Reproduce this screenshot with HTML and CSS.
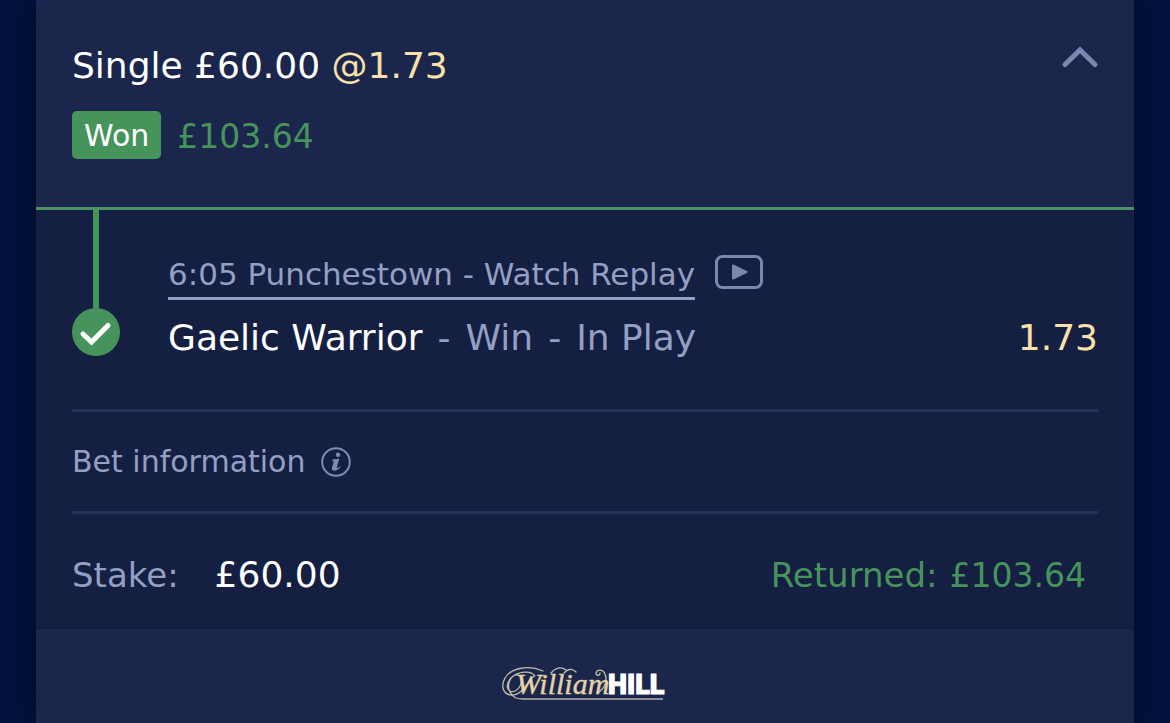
FILE: index.html
```
<!DOCTYPE html>
<html lang="en">
<head>
<meta charset="utf-8">
<meta name="viewport" content="width=device-width, initial-scale=1">
<title>Bet receipt</title>
<link rel="stylesheet" href="styles.css">
</head>
<body>
<main class="slip">
  <header class="slip-header">
    <div class="summary">
      <h1 class="title">Single £60.00 <span class="odds">@1.73</span></h1>
      <div class="result"><span class="badge">Won</span><span class="winnings">£103.64</span></div>
    </div>
    <button class="toggle" type="button" aria-label="Collapse bet" aria-expanded="true">
      <svg width="40" height="28" viewBox="0 0 40 28" fill="none" stroke="currentColor" stroke-width="5" stroke-linecap="round"><path d="M5 22.500 20 8 35 22.500" stroke-linejoin="miter"/></svg>
    </button>
  </header>
  <section class="details">
    <div class="leg">
      <div class="track">
        <span class="line"></span>
        <svg class="tick" width="48" height="48" viewBox="0 0 48 48" role="img" aria-label="Won"><circle cx="24" cy="24" r="24" fill="#46935b"/><path d="M11 26 19.500 34 36 17.500" fill="none" stroke="#fff" stroke-width="5" stroke-linecap="round" stroke-linejoin="miter"/></svg>
      </div>
      <div class="leg-text">
        <div class="event">
          <a class="event-link" href="#replay">6:05 Punchestown - Watch Replay</a>
          <button class="replay" type="button" aria-label="Play replay">
            <svg width="48" height="34" viewBox="0 0 48 34"><rect x="1.500" y="1.500" width="45" height="31" rx="6" fill="none" stroke="currentColor" stroke-width="3"/><path d="M18 10.500v13l13.500-6.500z" fill="currentColor" stroke="currentColor" stroke-width="2" stroke-linejoin="round"/></svg>
          </button>
        </div>
        <div class="selection">
          <div class="pick"><span class="runner">Gaelic Warrior</span><span>-</span><span>Win</span><span>-</span><span>In Play</span></div>
          <span class="odds">1.73</span>
        </div>
      </div>
    </div>
    <button class="info" type="button">Bet information
      <svg width="30" height="30" viewBox="0 0 30 30"><circle cx="15" cy="15" r="13.800" fill="none" stroke="currentColor" stroke-width="2"/><circle cx="17" cy="7.800" r="2.200" fill="currentColor"/><path d="M11.500 12.500c2.200 0 4-.3 6.800-.9l-2.500 8.900c-.3 1.200 1.400.6 3.200-1.300l.5.600c-2.200 3.200-4.400 4-6.500 3.900-1.900-.1-2.500-1.300-2-2.900l1.600-5.900c.2-.8-.4-1-1.400-1z" fill="currentColor"/></svg>
    </button>
    <dl class="totals">
      <div class="total"><dt>Stake:</dt><dd class="stake">£60.00</dd></div>
      <div class="total returned"><dt>Returned:</dt><dd>£103.64</dd></div>
    </dl>
  </section>
  <footer class="slip-footer">
    <svg class="logo" width="168" height="38" viewBox="0 0 168 38" role="img" aria-label="William Hill">
      <g fill="none" stroke="#c4bda6" stroke-width="1.300" stroke-linecap="round">
        <path d="M42 5C26-2 9 3 4 12c-5 9-1 17 7 17 10 0 15-12 22-19"/>
        <path d="M34 10C30 4 17 5 10 12c-7 8-3 16 4 13 7-4 9-14 3-16-7-1-12 9-8 17 3 6 7 7 14 7"/>
        <path d="M50 7c4-5 10-7 15-3M63 7c3-4 8-5 12-1M96 27c7-3 11-12 8-19-2-5-8-5-9-1 0 3 4 3 4 0"/>
      </g>
      <path d="M22 33h140" stroke="#8d8c94" stroke-width="2"/>
      <text class="logo-script" x="15" y="28">William</text>
      <text class="logo-block" x="107" y="28">HILL</text>
    </svg>
  </footer>
</main>
</body>
</html>
```
FILE: styles.css
```
* { box-sizing: border-box; }

body {
  margin: 0;
  padding: 0 36px;
  background: #00133f;
  color: #949fc4;
  font-family: Verdana, "DejaVu Sans", sans-serif;
  font-size: 30px;
}

button {
  padding: 0;
  border: 0;
  background: none;
  color: #7b87ae;
  font: inherit;
  cursor: pointer;
}

svg { display: block; }

.slip {
  display: flex;
  flex-direction: column;
  min-height: 100vh;
  background: #1b264d;
  box-shadow: 0 0 36px #000a25;
}

.slip-header {
  display: flex;
  justify-content: space-between;
  align-items: flex-start;
  padding: 42px 34px 48px 36px;
  border-bottom: 3px solid #4a9168;
}

.title {
  margin: 0 0 21px;
  color: #fff;
  font-size: 36px;
  font-weight: 400;
  line-height: 48px;
}

.odds { color: #f9e1a8; }

.result {
  display: flex;
  align-items: center;
  gap: 16px;
}

.badge {
  padding: 2px 12px 0;
  border-radius: 5px;
  background: #46935b;
  color: #fff;
  line-height: 46px;
}

.winnings {
  padding-top: 4px;
  color: #46935b;
  font-size: 33px;
  line-height: 44px;
}

.details {
  padding: 0 36px;
  border-bottom: 1px solid #0f1a3f;
  background: #141f42;
}

.leg {
  display: flex;
  gap: 48px;
  padding-bottom: 45px;
  border-bottom: 3px solid #26325a;
}

.track {
  display: flex;
  flex-direction: column;
  align-items: center;
  padding-bottom: 8px;
}

.line {
  flex: 1;
  width: 6px;
  background: #46935b;
}

.leg-text {
  flex: 1;
  padding-top: 42px;
}

.event {
  display: flex;
  align-items: flex-start;
  gap: 20px;
}

.event-link {
  border-bottom: 3px solid #949fc4;
  color: inherit;
  font-size: 31px;
  line-height: 45px;
  text-decoration: none;
}

.replay { padding-top: 3px; }

.selection {
  display: flex;
  justify-content: space-between;
  padding: 13px 0 1px;
  font-size: 36px;
  line-height: 50px;
}

.pick {
  display: flex;
  gap: 15px;
}

.runner { color: #fff; }

.info {
  display: flex;
  align-items: center;
  gap: 16px;
  width: 100%;
  height: 102px;
  border-bottom: 3px solid #26325a;
  color: #949fc4;
}

.info svg { color: #808bb1; }

.totals {
  display: flex;
  justify-content: space-between;
  align-items: baseline;
  margin: 0;
  padding: 37px 12px 28px 0;
}

.total {
  display: flex;
  align-items: baseline;
  gap: 36px;
  font-size: 33px;
  line-height: 48px;
}

.total dt { font-size: 34px; }

.total dd { margin: 0; }

.total .stake {
  color: #fff;
  font-size: 36px;
}

.returned {
  gap: 12px;
  color: #46935b;
}

.slip-footer {
  display: flex;
  justify-content: center;
  padding-top: 37px;
}

.logo-script {
  fill: #e3d3a5;
  stroke: #e3d3a5;
  stroke-width: 0.4px;
  font: italic 30px "Liberation Serif", serif;
}

.logo-block {
  fill: #fff;
  stroke: #fff;
  stroke-width: 1px;
  font: 900 27px Roboto, sans-serif;
}
```
